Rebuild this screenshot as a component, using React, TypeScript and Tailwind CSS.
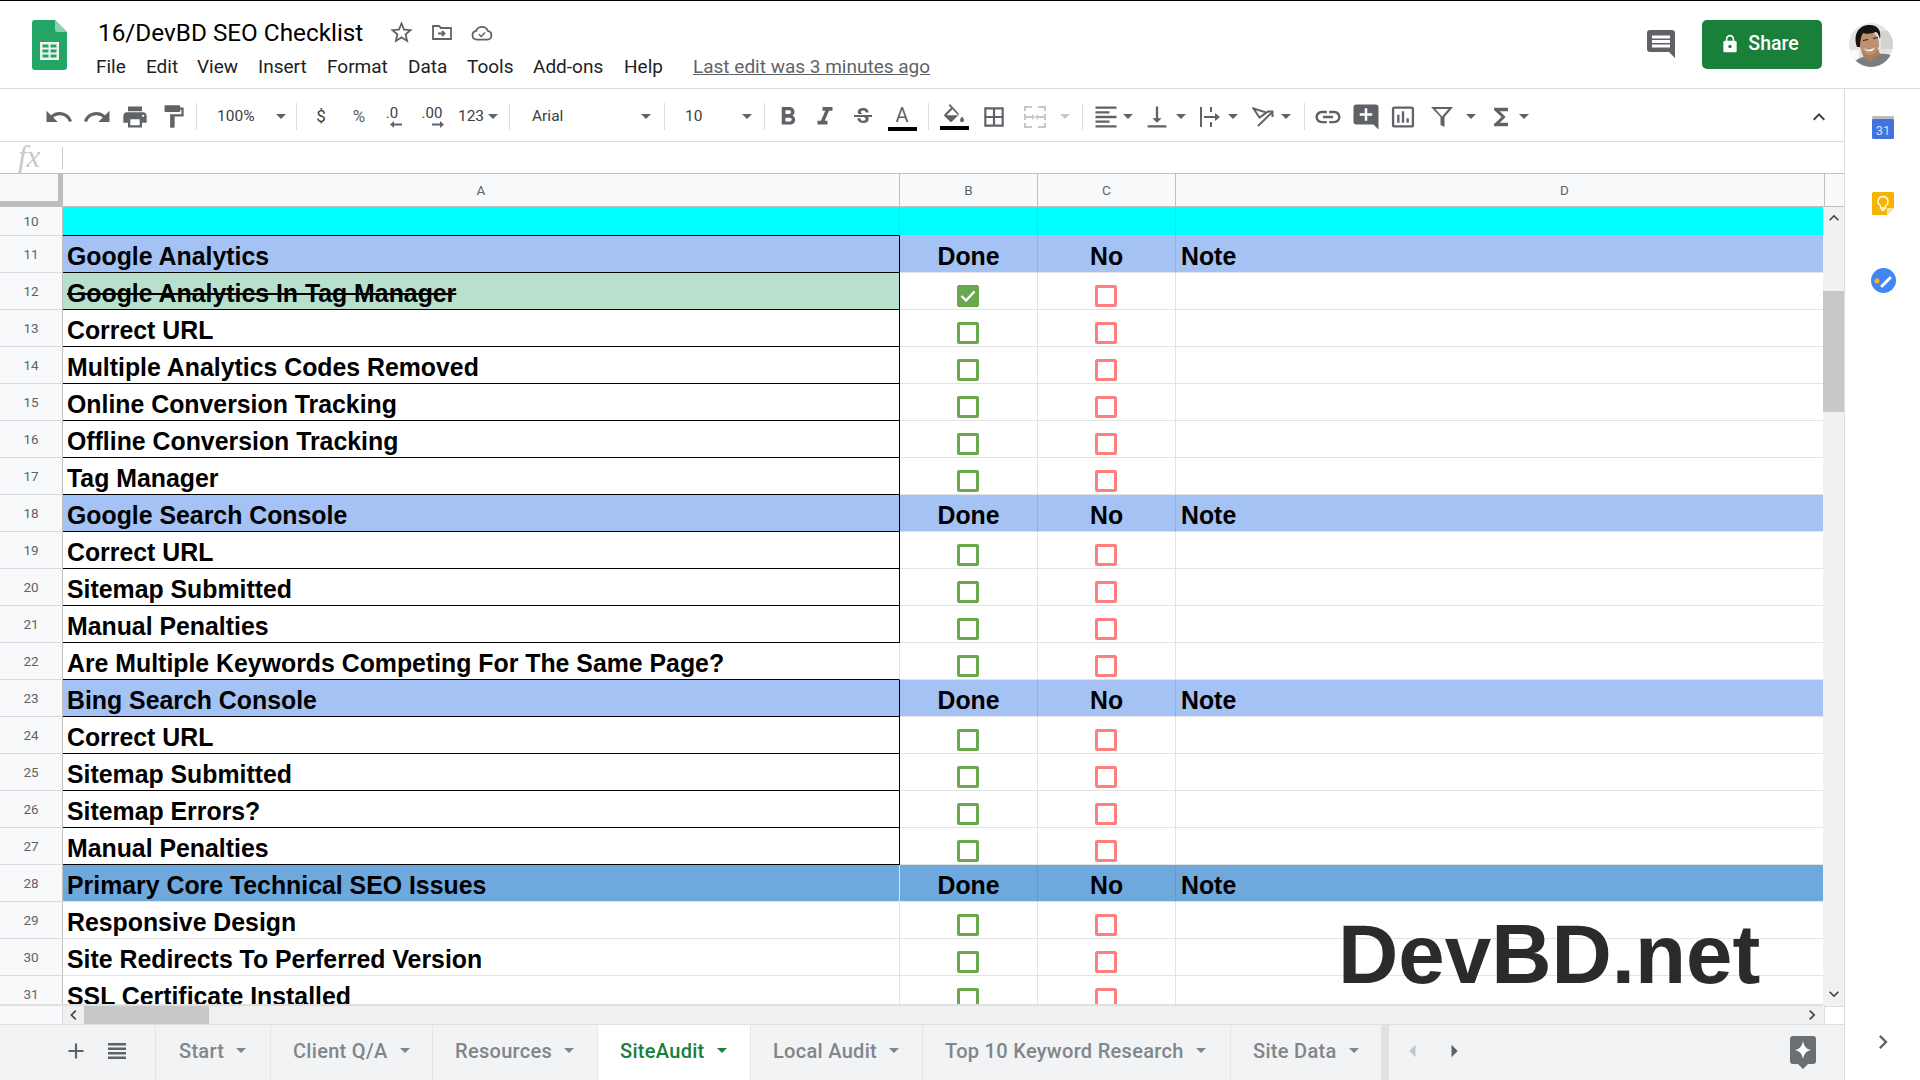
import type { ReactNode } from 'react';
import {
  MdUndo,
  MdRedo,
  MdPrint,
  MdFormatPaint,
  MdFormatBold,
  MdFormatItalic,
  MdStrikethroughS,
  MdBorderAll,
  MdFormatAlignLeft,
  MdVerticalAlignBottom,
  MdLink,
  MdAddComment,
  MdFunctions,
  MdKeyboardArrowUp,
  MdKeyboardArrowDown,
  MdKeyboardArrowLeft,
  MdKeyboardArrowRight,
  MdStarBorder,
  MdAdd,
  MdLock,
  MdArrowLeft,
  MdArrowRight,
  MdInsertChartOutlined,
} from 'react-icons/md';

type RowKind = 'blank' | 'blue' | 'dark' | 'item' | 'done' | 'plain';

interface SheetRow {
  n: number;
  kind: RowKind;
  label?: string;
}

const ROWS: SheetRow[] = [
  { n: 10, kind: 'blank' },
  { n: 11, kind: 'blue', label: 'Google Analytics' },
  { n: 12, kind: 'done', label: 'Google Analytics In Tag Manager' },
  { n: 13, kind: 'item', label: 'Correct URL' },
  { n: 14, kind: 'item', label: 'Multiple Analytics Codes Removed' },
  { n: 15, kind: 'item', label: 'Online Conversion Tracking' },
  { n: 16, kind: 'item', label: 'Offline Conversion Tracking' },
  { n: 17, kind: 'item', label: 'Tag Manager' },
  { n: 18, kind: 'blue', label: 'Google Search Console' },
  { n: 19, kind: 'item', label: 'Correct URL' },
  { n: 20, kind: 'item', label: 'Sitemap Submitted' },
  { n: 21, kind: 'item', label: 'Manual Penalties' },
  { n: 22, kind: 'plain', label: 'Are Multiple Keywords Competing For The Same Page?' },
  { n: 23, kind: 'blue', label: 'Bing Search Console' },
  { n: 24, kind: 'item', label: 'Correct URL' },
  { n: 25, kind: 'item', label: 'Sitemap Submitted' },
  { n: 26, kind: 'item', label: 'Sitemap Errors?' },
  { n: 27, kind: 'item', label: 'Manual Penalties' },
  { n: 28, kind: 'dark', label: 'Primary Core Technical SEO Issues' },
  { n: 29, kind: 'item', label: 'Responsive Design' },
  { n: 30, kind: 'item', label: 'Site Redirects To Perferred Version' },
  { n: 31, kind: 'item', label: 'SSL Certificate Installed' },
];

const TABS = [
  { name: 'Start', cls: 'w-[115px] pl-[23px]' },
  { name: 'Client Q/A', cls: 'w-[162px] pl-[22px]' },
  { name: 'Resources', cls: 'w-[165px] pl-[22px]' },
  { name: 'SiteAudit', cls: 'w-[153px] pl-[22px]', active: true },
  { name: 'Local Audit', cls: 'w-[172px] pl-[22px]' },
  { name: 'Top 10 Keyword Research', cls: 'w-[308px] pl-[22px]' },
  { name: 'Site Data', cls: 'w-[151px] pl-[22px]' },
];

function Caret({ className = 'text-[#5f6368]' }: { className?: string }) {
  return (
    <svg width="10" height="5" viewBox="0 0 10 5" className={`shrink-0 fill-current ${className}`}>
      <path d="M0 0h10L5 5z" />
    </svg>
  );
}

function Sep({ className = '' }: { className?: string }) {
  return (
    <div className={`flex w-2 shrink-0 justify-center ${className}`}>
      <div className="h-[27px] w-px bg-[#dadce0]" />
    </div>
  );
}

function Tool({ className, children }: { className: string; children: ReactNode }) {
  return <div className={`flex h-full shrink-0 items-center justify-center text-[#5f6368] ${className}`}>{children}</div>;
}

function Toolbar() {
  return (
    <div className="flex h-[53px] shrink-0 items-center border-b border-[#dadce0] pl-10 pt-[3px] text-[#444746]">
      <Tool className="w-[38px]"><MdUndo size={30} /></Tool>
      <Tool className="w-[38px]"><MdRedo size={30} /></Tool>
      <Tool className="w-[38px]"><MdPrint size={28} /></Tool>
      <Tool className="w-[38px]"><MdFormatPaint size={27} /></Tool>
      <Sep />
      <Tool className="w-[92px] !justify-between pl-[17px] pr-[6px]">
        <span className="text-[15.5px] text-[#3c4043]">100%</span>
        <Caret />
      </Tool>
      <Sep />
      <Tool className="w-[42px]"><span className="text-[17px] text-[#3c4043]">$</span></Tool>
      <Tool className="w-[34px]"><span className="text-[17px]">%</span></Tool>
      <Tool className="w-[32px]">
        <div className="flex flex-col items-center">
          <span className="text-[15px] leading-[16px] text-[#3c4043]">.0</span>
          <svg width="12" height="7" viewBox="0 0 12 7" className="ml-2 fill-[#5f6368]"><path d="M0 3.5 4 0v2.5h8v2H4V7z" /></svg>
        </div>
      </Tool>
      <Tool className="w-[48px]">
        <div className="flex flex-col items-center">
          <span className="text-[15px] leading-[16px] text-[#3c4043]">.00</span>
          <svg width="12" height="7" viewBox="0 0 12 7" className="ml-3 fill-[#5f6368]"><path d="M12 3.5 8 0v2.5H0v2h8V7z" /></svg>
        </div>
      </Tool>
      <Tool className="w-[30px]"><span className="text-[15.5px] text-[#3c4043]">123</span></Tool>
      <Tool className="w-[14px]"><Caret /></Tool>
      <Sep className="ml-[5px]" />
      <Tool className="w-[147px] !justify-between pl-[19px] pr-[9px]">
        <span className="text-[15.5px] text-[#3c4043]">Arial</span>
        <Caret />
      </Tool>
      <Sep />
      <Tool className="w-[92px] !justify-between pl-[17px] pr-[8px]">
        <span className="text-[15.5px] text-[#3c4043]">10</span>
        <Caret />
      </Tool>
      <Sep />
      <Tool className="w-[40px]"><MdFormatBold size={30} /></Tool>
      <Tool className="w-[34px]"><MdFormatItalic size={30} /></Tool>
      <Tool className="w-[42px]"><MdStrikethroughS size={24} /></Tool>
      <Tool className="w-[36px]">
        <div className="flex flex-col items-center">
          <span className="mt-[1px] text-[20px] leading-[22px] text-[#5f6368]">A</span>
          <div className="mt-[1px] h-1 w-[29px] bg-black" />
        </div>
      </Tool>
      <Sep className="ml-1" />
      <Tool className="w-[44px]">
        <div className="flex flex-col items-center">
          <svg width="22" height="20" viewBox="0 0 22 20" className="fill-[#5f6368]">
            <path d="M7 0 5.6 1.4 8 3.8 1.6 10.2a1.4 1.4 0 0 0 0 2L7 17.6a1.4 1.4 0 0 0 2 0l6.4-6.4a1.4 1.4 0 0 0 0-2zM3.6 11.2 9.4 5.2l5.8 6z" />
            <path d="M19 12.5s-2 2.4-2 3.7a2 2 0 0 0 4 0c0-1.3-2-3.7-2-3.7z" />
          </svg>
          <div className="mt-[2px] h-1 w-[29px] bg-black" />
        </div>
      </Tool>
      <Tool className="w-[36px]"><MdBorderAll size={26} /></Tool>
      <Tool className="w-[46px]">
        <svg width="22" height="22" viewBox="0 0 22 22" className="fill-[#c4c7c9]">
          <path d="M0 0h8v2H2v3H0zM14 0h8v5h-2V2h-6zM0 17h2v3h6v2H0zM20 17h2v5h-8v-2h6zM0 8h2v2h6V8l3 3-3 3v-2H2v2H0zM22 8h-2v2h-6V8l-3 3 3 3v-2h6v2h2z" />
        </svg>
      </Tool>
      <Tool className="w-[14px]"><Caret className="text-[#c4c7c9]" /></Tool>
      <Sep className="ml-[6px]" />
      <Tool className="ml-[5px] w-[30px]"><MdFormatAlignLeft size={28} /></Tool>
      <Tool className="w-[14px]"><Caret /></Tool>
      <Tool className="ml-[7px] w-[30px]"><MdVerticalAlignBottom size={28} /></Tool>
      <Tool className="ml-[2px] w-[14px]"><Caret /></Tool>
      <Tool className="ml-[7px] w-[30px]">
        <svg width="20" height="20" viewBox="0 0 20 20" className="fill-[#5f6368]">
          <path d="M0 0h2v20H0zM10 0h2v5h-2zM10 15h2v5h-2zM4 9h11V6l5 4-5 4v-3H4z" />
        </svg>
      </Tool>
      <Tool className="ml-[1px] w-[14px]"><Caret /></Tool>
      <Tool className="ml-[8px] w-[30px]">
        <svg width="22" height="20" viewBox="0 0 22 20" fill="none" stroke="#5f6368" strokeWidth="2">
          <path d="M1.500 1.500l13 4-7 5z" />
          <path d="M6 19 20.500 5" />
          <path d="M15 4.500h5.500V10" />
        </svg>
      </Tool>
      <Tool className="ml-[1px] w-[14px]"><Caret /></Tool>
      <Sep className="ml-[7px]" />
      <Tool className="ml-[3px] w-[34px]"><MdLink size={30} /></Tool>
      <Tool className="ml-1 w-[34px]"><MdAddComment size={30} /></Tool>
      <Tool className="ml-[3px] w-[34px]"><MdInsertChartOutlined size={28} /></Tool>
      <Tool className="ml-[5px] w-[34px]">
        <svg width="22" height="22" viewBox="0 0 22 22" className="fill-[#5f6368]">
          <path d="M0 1h22l-8.500 10v10l-4-2v-8zM4.500 3 11 10.500 17.500 3z" fillRule="evenodd" />
        </svg>
      </Tool>
      <Tool className="ml-[5px] w-[14px]"><Caret /></Tool>
      <Tool className="ml-2 w-[30px]"><MdFunctions size={28} /></Tool>
      <Tool className="ml-[1px] w-[14px]"><Caret /></Tool>
      <Tool className="ml-auto mr-[13px] w-[24px]"><MdKeyboardArrowUp size={32} className="text-[#3c4043]" /></Tool>
    </div>
  );
}

function TitleBar() {
  return (
    <div className="flex h-[89px] shrink-0 border-b border-t border-[#dadce0] border-t-black pl-[32px]">
      <svg width="35" height="50" viewBox="0 0 35 50" className="mt-[19px] shrink-0">
        <path d="M3 0h20l12 12v35a3 3 0 0 1-3 3H3a3 3 0 0 1-3-3V3a3 3 0 0 1 3-3z" fill="#23a566" />
        <path d="M23 0l12 12H25a2 2 0 0 1-2-2z" fill="#8ed1b1" />
        <path d="M8 22h19v18H8zM10.500 24.500v3h6v-3zM18.500 24.500v3h6v-3zM10.500 29.500v3h6v-3zM18.500 29.500v3h6v-3zM10.500 34.500v3h6v-3zM18.500 34.500v3h6v-3z" fill="#f1f1f1" fillRule="evenodd" />
      </svg>
      <div className="ml-[31px] flex flex-col">
        <div className="mt-[15px] flex h-[33px] items-center">
          <span className="text-[24.3px] leading-[33px] text-black">16/DevBD SEO Checklist</span>
          <MdStarBorder size={27} className="ml-[25px] text-[#5f6368]" />
          <svg width="20" height="15" viewBox="0 0 20 15" fill="none" stroke="#5f6368" strokeWidth="1.800" className="ml-[17px]">
            <path d="M1 1h6l2 2h10v11H1z" />
            <path d="M6 8.500h6M10 6l2.500 2.500L10 11" />
          </svg>
          <svg width="22" height="16" viewBox="0 0 24 18" fill="none" stroke="#5f6368" strokeWidth="2" className="ml-[19px]">
            <path d="M6 16.500a5 5 0 0 1-.6-9.900A7 7 0 0 1 18.500 6.600 5 5 0 0 1 18 16.500z" />
            <path d="M8.500 10.500l2.500 2.500 4.500-4.500" strokeWidth="1.700" />
          </svg>
        </div>
        <div className="-ml-[2px] mt-[6px] flex h-6 items-center text-[19px] text-[#202124]">
          <span className="w-[50px]">File</span>
          <span className="w-[51px]">Edit</span>
          <span className="w-[61px]">View</span>
          <span className="w-[69px]">Insert</span>
          <span className="w-[81px]">Format</span>
          <span className="w-[59px]">Data</span>
          <span className="w-[66px]">Tools</span>
          <span className="w-[91px]">Add-ons</span>
          <span className="w-[69px]">Help</span>
          <span className="text-[#5f6368] underline">Last edit was 3 minutes ago</span>
        </div>
      </div>
      <div className="ml-auto flex items-start pr-[27px]">
        <svg width="28" height="28" viewBox="0 0 28 28" className="mt-[29px]">
          <path d="M3 0h22a3 3 0 0 1 3 3v25l-6-6H3a3 3 0 0 1-3-3V3a3 3 0 0 1 3-3z" fill="#5f6368" />
          <path d="M5 5.500h18v3H5zM5 10h18v3H5zM5 14.500h18v3H5z" fill="#fff" />
        </svg>
        <div className="ml-[27px] mt-[19px] flex h-[49px] w-[120px] items-center justify-center rounded-[5px] bg-[#188038] pb-[1px] pr-[5px] text-[19.5px] font-medium text-white">
          <MdLock size={20} className="mr-[8px]" />
          Share
        </div>
        <svg width="44" height="44" viewBox="0 0 44 44" className="ml-[27px] mt-[22px]">
          <defs>
            <clipPath id="avatar"><circle cx="22" cy="22" r="22" /></clipPath>
          </defs>
          <g clipPath="url(#avatar)">
            <rect width="44" height="44" fill="#e4e4e2" />
            <rect x="0" y="27" width="10" height="9" fill="#fafafa" />
            <rect x="32" y="8" width="12" height="18" fill="#d2d2d0" />
            <path d="M3 44c1-5 5-8 11-10l8 1 8-4c6-1 11 0 14 3v10z" fill="#7b7d7e" />
            <path d="M12 27l3 8 7 3 9-7-3-8z" fill="#a87e62" />
            <ellipse cx="20" cy="20" rx="10" ry="12" fill="#bd9070" transform="rotate(-12 20 20)" />
            <path d="M8 24C4 12 9 3 19 2c9-1 14 5 12 14-1-3-2-6-4-7-5 2-10 2-13 1-2 3-3 8-3 14z" fill="#17130f" />
            <path d="M15 25c3 3 8 2 11-1-1 5-9 6-11 1z" fill="#fff" />
            <path d="M14 17l5-1v1l-5 1zM24 15l5-1v1l-5 1z" fill="#2a1d16" />
          </g>
        </svg>
      </div>
    </div>
  );
}

function CheckBox({ color, checked }: { color: 'green' | 'red'; checked?: boolean }) {
  const tone = color === 'green' ? 'border-[#6aa84f]' : 'border-[#ff7f7f]';
  return (
    <div className={`mb-[2px] mr-[2px] flex h-[22px] w-[22px] items-center justify-center rounded-[2px] border-[3px] ${tone} ${checked ? 'bg-[#6aa84f]' : ''}`}>
      {checked && (
        <svg width="16" height="12" viewBox="0 0 16 12" fill="none" stroke="#fff" strokeWidth="2.400">
          <path d="M1.500 6l4.500 4.500L14.500 1.500" />
        </svg>
      )}
    </div>
  );
}

function Row({ row }: { row: SheetRow }) {
  const { n, kind, label } = row;
  const isHead = kind === 'blue' || kind === 'dark';
  const inBlack = n >= 10 && n <= 27;
  const bg =
    kind === 'blank' ? 'bg-[#00ffff]' : kind === 'blue' ? 'bg-[#a4c2f4]' : kind === 'dark' ? 'bg-[#6fa8dc]' : '';
  const divider =
    kind === 'blank'
      ? 'border-r-[#1ce3e3] border-b-[#a4c2f4]'
      : kind === 'blue'
        ? 'border-r-[#93afdc] border-b-[#e2e3e3]'
        : kind === 'dark'
          ? 'border-r-[#649bcd] border-b-[#e2e3e3]'
          : 'border-r-[#e2e3e3] border-b-[#e2e3e3]';
  const bottomA = inBlack ? 'border-b-black' : 'border-b-[#e2e3e3]';
  const rightA =
    kind === 'blank'
      ? 'border-r-[#1ce3e3]'
      : kind === 'plain' || n >= 28
        ? 'border-r-[#e2e3e3]'
        : 'border-r-black';
  const cellBase = 'flex h-full shrink-0 items-end border-b border-r text-[24.85px] font-bold leading-[30px] text-black font-["Liberation_Sans",Arial,sans-serif]';
  return (
    <div className={`flex shrink-0 ${n === 10 ? 'h-[29px]' : 'h-[37px]'}`}>
      <div className="flex h-full w-[63px] shrink-0 items-center justify-center border-b border-r border-b-[#dadce0] border-r-[#c0c0c0] bg-[#f8f9fa] text-[13.500px] text-[#5f6368]">
        {n}
      </div>
      <div
        className={`${cellBase} w-[837px] pl-[4px] ${bottomA} ${rightA} ${kind === 'done' ? 'bg-[#b7e1cd] line-through' : bg}`}
      >
        {label}
      </div>
      <div className={`${cellBase} w-[138px] justify-center ${divider} ${bg}`}>
        {isHead ? 'Done' : kind !== 'blank' && <CheckBox color="green" checked={kind === 'done'} />}
      </div>
      <div className={`${cellBase} w-[138px] justify-center ${divider} ${bg}`}>
        {isHead ? 'No' : kind !== 'blank' && <CheckBox color="red" />}
      </div>
      <div className={`${cellBase} w-[647px] pl-[5px] !border-r-0 ${divider} ${bg}`}>
        {isHead ? 'Note' : ''}
      </div>
    </div>
  );
}

function Grid() {
  return (
    <>
      <div className="flex h-[34px] shrink-0 border-b border-t border-[#c0c0c0] bg-[#f8f9fa] text-[13.500px] text-[#5f6368]">
        <div className="h-full w-[63px] shrink-0 border-b-[5px] border-r-[5px] border-[#bdbdbd]" />
        <div className="flex w-[837px] shrink-0 items-center justify-center border-r border-[#c0c0c0]">A</div>
        <div className="flex w-[138px] shrink-0 items-center justify-center border-r border-[#c0c0c0]">B</div>
        <div className="flex w-[138px] shrink-0 items-center justify-center border-r border-[#c0c0c0]">C</div>
        <div className="flex w-[649px] shrink-0 items-center justify-center border-r border-[#c0c0c0] pl-[129px]">D</div>
      </div>
      <div className="flex h-[799px] shrink-0">
        <div className="relative h-full w-[1823px] shrink-0 overflow-hidden border-b-2 border-[#e0e0e0]">
          {ROWS.map((row) => (
            <Row key={row.n} row={row} />
          ))}
          <div className="absolute left-[1338px] top-[697px] whitespace-nowrap text-[83.5px] font-bold leading-[100px] text-[#2b2b2b] font-['Liberation_Sans',Arial,sans-serif]">
            DevBD.net
          </div>
        </div>
        <div className="flex h-full w-[21px] shrink-0 flex-col items-center bg-[#f1f1f1]">
          <MdKeyboardArrowUp size={20} className="mt-[1px] text-[#444]" />
          <div className="mt-[63px] h-[121px] w-full bg-[#c8c8c8]" />
          <MdKeyboardArrowDown size={20} className="mb-[2px] mt-auto text-[#444]" />
        </div>
      </div>
      <div className="flex h-[19px] shrink-0 items-center border-b border-[#e0e0e0] bg-[#f0f0f0]">
        <div className="h-full w-[63px] shrink-0 border-r border-[#dadce0] bg-[#f8f9fa]" />
        <MdKeyboardArrowLeft size={20} className="w-[21px] shrink-0 text-[#444]" />
        <div className="h-full w-[125px] shrink-0 bg-[#c8c8c8]" />
        <MdKeyboardArrowRight size={20} className="ml-auto mr-[2px] text-[#444]" />
        <div className="h-full w-5 shrink-0 border-l border-t border-[#dadce0] bg-white" />
      </div>
    </>
  );
}

function TabBar() {
  return (
    <div className="flex h-[55px] shrink-0 bg-[#f1f3f4]">
      <div className="flex w-[156px] shrink-0 items-center border-r border-[#e4e6e8] pb-[4px] pl-[63px] text-[#5f6368]">
        <MdAdd size={26} />
        <svg width="18" height="16" viewBox="0 0 18 16" className="ml-[19px] fill-[#5f6368]">
          <path d="M0 0h18v2.500H0zM0 4.500h18V7H0zM0 9h18v2.500H0zM0 13.500h18V16H0z" />
        </svg>
      </div>
      {TABS.map((tab) => (
        <div
          key={tab.name}
          className={`flex h-full shrink-0 items-center border-r border-[#e4e6e8] pb-[4px] text-[20px] font-medium tracking-[0.3px] ${tab.cls} ${tab.active ? 'bg-white text-[#188038]' : 'text-[#80868b]'}`}
        >
          <span>{tab.name}</span>
          <Caret className={`ml-[12px] ${tab.active ? 'text-[#188038]' : 'text-[#80868b]'}`} />
        </div>
      ))}
      <div className="h-full w-[7px] shrink-0 bg-[#dfe1e3]" />
      <div className="flex flex-1 items-center pl-[9px]">
        <div className="flex items-center pb-[4px]">
          <MdArrowLeft size={30} className="text-[#c4c7ca]" />
          <MdArrowRight size={30} className="ml-[11px] text-[#5f6368]" />
        </div>
        <svg width="26" height="33" viewBox="0 0 26 33" className="ml-auto mr-[28px]">
          <path d="M3 0h20a3 3 0 0 1 3 3v22a3 3 0 0 1-3 3h-5l-5 5-5-5H3a3 3 0 0 1-3-3V3a3 3 0 0 1 3-3z" fill="#6b6e72" />
          <path d="M13 5c1 5 3 8 8 9-5 1-7 4-8 9-1-5-3-8-8-9 5-1 7-4 8-9z" fill="#fff" />
        </svg>
      </div>
    </div>
  );
}

function SidePanel() {
  return (
    <div className="flex w-[76px] shrink-0 flex-col items-center border-l border-[#dadce0] pl-[1px] pt-[27px]">
      <svg width="22" height="23" viewBox="0 0 22 23">
        <rect y="0" width="22" height="6" rx="1" fill="#bdbdbd" />
        <rect y="3" width="22" height="20" rx="1.500" fill="#3f73e0" />
        <text x="11" y="19" textAnchor="middle" fontSize="13" fill="#cfe0fb" fontFamily="Roboto, sans-serif">31</text>
      </svg>
      <svg width="22" height="23" viewBox="0 0 22 23" className="mt-[53px]">
        <path d="M1.500 0h19A1.500 1.500 0 0 1 22 1.500V16l-7 7H1.500A1.500 1.500 0 0 1 0 21.500v-20A1.500 1.500 0 0 1 1.500 0z" fill="#f5b400" />
        <path d="M22 16h-6a1 1 0 0 0-1 1v6z" fill="#fde293" />
        <path d="M11 4.500a5 5 0 0 1 2.500 9.300V16h-5v-2.200A5 5 0 0 1 11 4.500zM9 18h4" fill="none" stroke="#fff" strokeWidth="1.300" />
      </svg>
      <svg width="25" height="25" viewBox="0 0 25 25" className="mt-[53px]">
        <circle cx="12.500" cy="12.500" r="12.500" fill="#4285f4" />
        <circle cx="6" cy="13" r="2.500" fill="#fbbc04" />
        <path d="M11 18l8-8" stroke="#fff" strokeWidth="3" strokeLinecap="round" />
      </svg>
      <MdKeyboardArrowRight size={28} className="mb-[24px] mt-auto text-[#5f6368]" />
    </div>
  );
}

export default function App() {
  return (
    <div className="flex h-[1080px] w-[1920px] flex-col overflow-hidden bg-white font-['Roboto',Arial,sans-serif]">
      <TitleBar />
      <div className="flex flex-1">
        <div className="flex w-[1844px] shrink-0 flex-col">
          <Toolbar />
          <div className="flex h-[31px] shrink-0 items-center">
            <span className="w-[62px] pb-[3px] pl-[18px] font-['Liberation_Serif',serif] text-[31px] italic leading-none text-[#c8c8c8]">fx</span>
            <div className="h-[22px] w-px bg-[#c8c8c8]" />
          </div>
          <Grid />
          <TabBar />
        </div>
        <SidePanel />
      </div>
    </div>
  );
}
